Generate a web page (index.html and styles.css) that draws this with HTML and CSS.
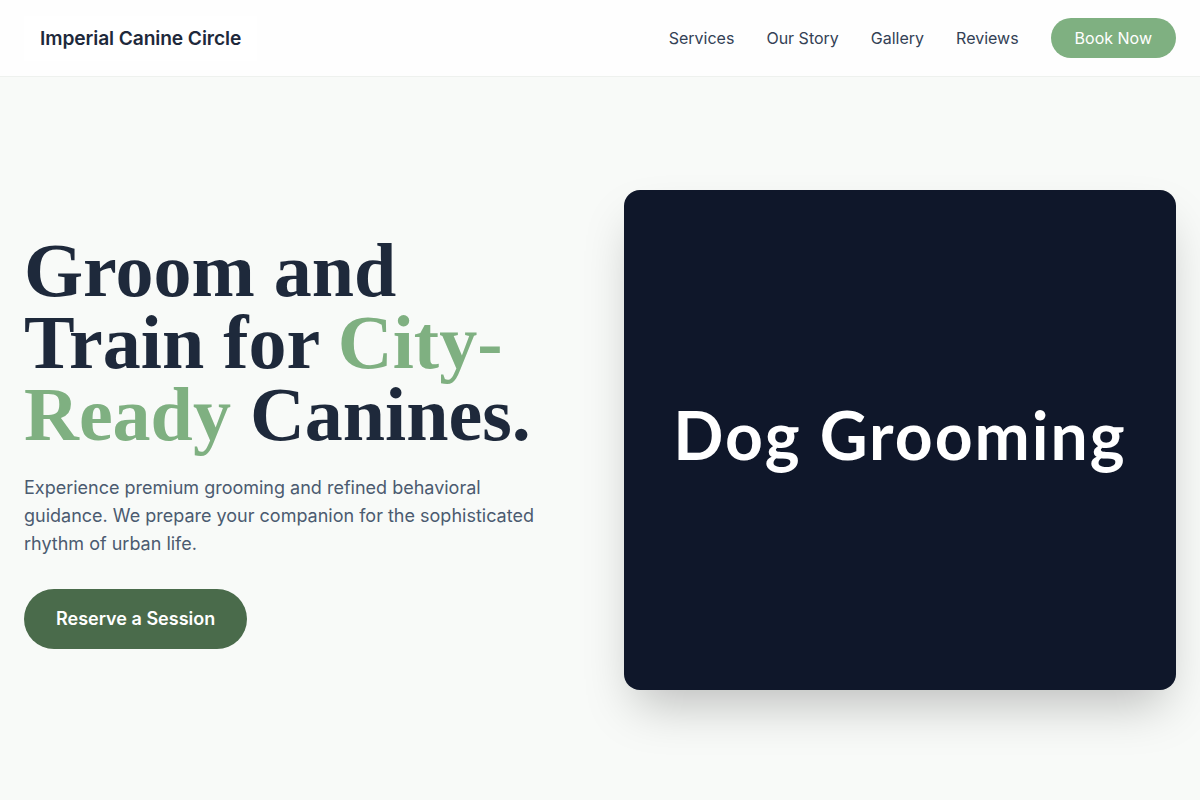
FILE: index.html
```html
<!DOCTYPE html>
<html lang="en">
<head>
<meta charset="utf-8">
<title>Imperial Canine Circle</title>
<link rel="stylesheet" href="styles.css">
</head>
<body>
<header class="site-header">
  <div class="logo">Imperial Canine Circle</div>
  <nav class="nav">
    <a href="#" class="nav-link">Services</a>
    <a href="#" class="nav-link">Our Story</a>
    <a href="#" class="nav-link">Gallery</a>
    <a href="#" class="nav-link">Reviews</a>
    <a href="#" class="btn-book">Book Now</a>
  </nav>
</header>
<main class="hero">
  <div class="hero-text">
    <h1 class="headline">Groom and Train for <span class="accent">City-Ready</span> Canines.</h1>
    <p class="lead">Experience premium grooming and refined behavioral guidance. We prepare your companion for the sophisticated rhythm of urban life.</p>
    <a href="#" class="btn-reserve">Reserve a Session</a>
  </div>
  <div class="hero-media">
    <div class="media-card"><span class="media-label">Dog Grooming</span></div>
  </div>
</main>
</body>
</html>
```

FILE: styles.css
```css
* { box-sizing: border-box; }
html, body { margin: 0; padding: 0; }
body {
  background: #f8faf8;
  font-family: Inter, "Noto Sans", sans-serif;
  color: #1e293b;
  height: 800px;
  overflow: hidden;
}
a { text-decoration: none; }

.site-header {
  height: 77px;
  background: #fefefe;
  border-bottom: 1px solid #eef1ee;
  display: flex;
  align-items: center;
  justify-content: space-between;
  padding: 0 24px;
}
.logo {
  background: #ffffff;
  padding: 10px 16px;
  font-size: 19.2px;
  font-weight: 600;
  color: #1e293b;
  line-height: 25px;
  letter-spacing: -0.1px;
}
.nav {
  display: flex;
  align-items: center;
  gap: 32px;
}
.nav-link {
  font-size: 16px;
  color: #334155;
  line-height: 24px;
}
.btn-book {
  background: #7fb081;
  color: #ffffff;
  font-size: 16px;
  line-height: 24px;
  padding: 8px 24px;
  border-radius: 999px;
}

.hero {
  height: 723px;
  display: grid;
  grid-template-columns: 1fr 1fr;
  gap: 48px;
  padding: 2px 24px 0;
  align-items: center;
}
.hero-text { margin-top: 3px; }
.headline {
  margin: 0;
  font-family: "Liberation Serif", "Times New Roman", serif;
  font-weight: 700;
  font-size: 76px;
  line-height: 72px;
  color: #1e293b;
}
.accent { color: #7fb081; }
.lead {
  margin: 24px 0 31px;
  max-width: 540px;
  font-size: 18px;
  line-height: 28px;
  color: #4b5b70;
}
.btn-reserve {
  display: inline-block;
  background: #4a6b4b;
  color: #ffffff;
  font-size: 18px;
  font-weight: 600;
  line-height: 24px;
  padding: 18px 32px;
  border-radius: 999px;
}

.hero-media { display: flex; }
.media-card {
  width: 100%;
  height: 500px;
  background: #0f172a;
  border-radius: 16px;
  box-shadow: 0 25px 50px -12px rgba(0, 0, 0, 0.25);
  display: flex;
  align-items: center;
  justify-content: center;
}
.media-label {
  font-family: Lato, "Noto Sans", sans-serif;
  font-weight: 700;
  font-size: 66px;
  letter-spacing: 2px;
  color: #ffffff;
  line-height: 1;
  padding-bottom: 10px;
}
```
